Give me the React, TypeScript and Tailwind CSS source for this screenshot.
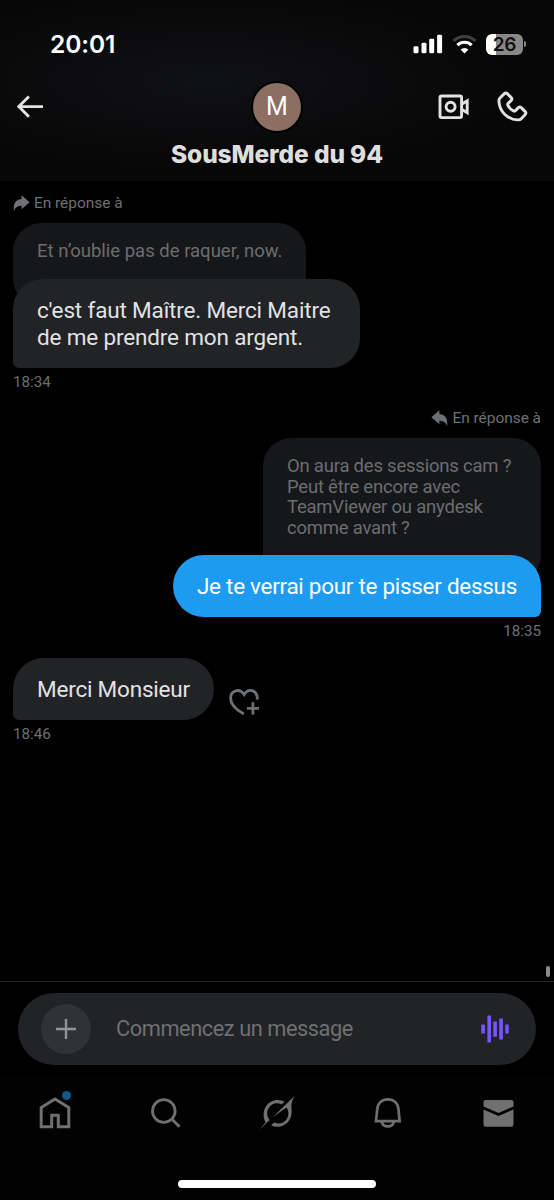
import React from 'react';

function StatusBar() {
  return (
    <div className="flex h-[88px] items-center justify-between pl-[50px] pr-[28px]">
      <span className="font-['Inter'] text-[24.5px] font-semibold tracking-[-0.1px] text-white">20:01</span>
      <div className="flex items-center">
        <svg width="30" height="20" viewBox="0 0 30 20" fill="#fff">
          <rect x="0.5" y="12.3" width="5" height="7" rx="1.4" />
          <rect x="8.5" y="8.8" width="5" height="10.5" rx="1.4" />
          <rect x="16.2" y="4.8" width="5" height="14.5" rx="1.4" />
          <rect x="24.1" y="0.8" width="5" height="18.5" rx="1.4" />
        </svg>
        <svg className="ml-[9px]" width="25" height="20" viewBox="0 0 25 20" fill="none" strokeWidth="3.2">
          <path d="M1.6 7a15.5 15.5 0 0 1 21.8 0" stroke="#3f3f40" />
          <path d="M5.4 11.2a10 10 0 0 1 14.2 0" stroke="#fff" />
          <path d="M8.6 15.6a5.6 5.6 0 0 1 7.8 0L12.5 19.5z" fill="#fff" />
        </svg>
        <div className="ml-[9px] flex h-[21px] w-[37px] items-center justify-center rounded-[6px] bg-[linear-gradient(90deg,#fff_27%,#88888a_27%)]">
          <span className="font-['Inter'] text-[19px] font-semibold leading-none tracking-[-0.3px] text-[#111]">26</span>
        </div>
        <div className="ml-[1px] h-[6px] w-[2px] rounded-r-full bg-[#88888a]" />
      </div>
    </div>
  );
}

function Header() {
  return (
    <header className="h-[181px] bg-[#070708] bg-[radial-gradient(ellipse_at_38%_45%,#101113_0%,#070708_62%)]">
      <StatusBar />
      <div className="-mt-[7px] grid grid-cols-3 items-center px-[16px]">
        <svg width="28" height="24" viewBox="0 0 28 24" fill="none" stroke="#e2e2e3" strokeWidth="2.9">
          <path d="M12.9 1.4 2.8 11.6l10.1 10.2M3 11.6h24" />
        </svg>
        <div className="my-[1.5px] flex size-[48px] items-center justify-center justify-self-center rounded-full bg-[#8d6e63] text-[25px] text-white ring-2 ring-black">
          M
        </div>
        <div className="flex items-center justify-end gap-[27px] pr-[10px]">
          <svg width="32" height="26" viewBox="0 0 32 26" fill="none" stroke="#e2e2e3" strokeWidth="2.9">
            <rect x="2" y="2" width="21.6" height="21.6" rx="1.6" />
            <circle cx="12.6" cy="12.8" r="4.5" />
            <path d="m23.5 10.3 5.7-3.4v11.8l-5.7-3.4" />
          </svg>
          <svg width="31" height="32" viewBox="0 0 31 32" fill="none" stroke="#e2e2e3" strokeWidth="2.9" strokeLinejoin="round">
            <path d="M3.2 6.8 7.4 2.6q1.4-1.3 2.8 0l4 4q1.3 1.4 0 2.8l-3 3q-.9.9-.3 2 1.8 3.7 5.5 5.5 1.1.5 2-.3l3-3q1.4-1.3 2.8 0l4 4q1.3 1.4 0 2.8L24.4 27.6q-1.5 1.5-3.8 1.3C10.2 28.2 2.6 20.6 1.9 10.4Q1.7 8.2 3.2 6.8Z" />
          </svg>
        </div>
      </div>
      <h1 className="mt-[6px] text-center font-['Inter'] text-[24.5px] font-extrabold leading-[32px] tracking-[-0.12px] text-[#dededf]">
        SousMerde du 94
      </h1>
    </header>
  );
}

function ReplyIcon({ flipped = false }: { flipped?: boolean }) {
  return (
    <svg className={flipped ? '-scale-x-100' : ''} width="17" height="17" viewBox="0 0 17 17" fill="#6d7074">
      <path d="M8.6.3 16.6 7.3 8.6 14.2V10.7Q2.6 10.6.9 16.2-.4 4.6 8.6 4Z" />
    </svg>
  );
}

function ReplyLabel({ flipped = false }: { flipped?: boolean }) {
  return (
    <div className="flex h-[20px] items-center gap-[4px] text-[15.5px] tracking-[-0.05px] text-[#6d7074]">
      <ReplyIcon flipped={flipped} />
      <span className="pt-[2px]">En réponse à</span>
    </div>
  );
}

function Messages() {
  return (
    <main className="flex h-[800px] flex-col px-[13px] pt-[12px]">
      <section className="flex flex-col items-start">
        <ReplyLabel />
        <div className="mt-[10px] h-[84px] w-[293px] rounded-[28px] bg-[#16171a] pl-[24px] pt-[18px] text-[18.5px] leading-[21px] text-[#6b6d70]">
          <p className="whitespace-nowrap">Et n’oublie pas de raquer, now.</p>
        </div>
        <div className="-mt-[28px] h-[89px] w-[347px] rounded-[30px] rounded-bl-[6px] bg-[#212327] pl-[24px] pt-[18px] text-[22.5px] leading-[26.5px] tracking-[-0.16px] text-[#e1e2e3]">
          <p className="whitespace-nowrap">c'est faut Maître. Merci Maitre</p>
          <p className="whitespace-nowrap">de me prendre mon argent.</p>
        </div>
        <time className="mt-[4px] text-[15.2px] leading-[20px] text-[#6d7074]">18:34</time>
      </section>

      <section className="mt-[16px] flex flex-col items-end">
        <ReplyLabel flipped />
        <div className="mt-[10px] h-[145px] w-[278px] rounded-[28px] bg-[#16171a] pl-[24px] pt-[18px] text-[18.5px] leading-[20.7px] tracking-[-0.22px] text-[#6b6d70]">
          <p className="whitespace-nowrap">On aura des sessions cam ?</p>
          <p className="whitespace-nowrap">Peut être encore avec</p>
          <p className="whitespace-nowrap">TeamViewer ou anydesk</p>
          <p className="whitespace-nowrap">comme avant ?</p>
        </div>
        <div className="-mt-[28px] h-[62px] w-[368px] rounded-[31px] rounded-br-[6px] bg-[#1d9bf0] pl-[24px] pt-[18px] text-[22.5px] leading-[26.5px] tracking-[-0.29px] text-white">
          <p className="whitespace-nowrap">Je te verrai pour te pisser dessus</p>
        </div>
        <time className="mt-[4px] text-[15.2px] leading-[20px] text-[#6d7074]">18:35</time>
      </section>

      <section className="mt-[17px] flex flex-col items-start">
        <div className="flex items-end gap-[15px]">
          <div className="h-[62px] w-[201px] rounded-[31px] rounded-bl-[6px] bg-[#212327] pl-[24px] pt-[18px] text-[22.5px] leading-[26.5px] tracking-[-0.2px] text-[#e1e2e3]">
            <p className="whitespace-nowrap">Merci Monsieur</p>
          </div>
          <svg className="mb-[3px]" width="31" height="29" viewBox="0 0 31 29" fill="none" stroke="#6d7074" strokeWidth="2.8">
            <path d="M14.8 26C8.8 22.6 1.6 17 1.6 10.2 1.6 2.3 10.7-.4 15.2 6.6 19-.3 28.4 1.2 28.4 11.5M23.9 14.2v12.2M17.9 20.3H30" />
          </svg>
        </div>
        <time className="mt-[4px] text-[15.2px] leading-[20px] text-[#6d7074]">18:46</time>
      </section>
      <div className="-mr-[9px] mb-[4px] mt-auto h-[11px] w-[4px] self-end rounded-full bg-[#8b8b8c]" />
    </main>
  );
}

function Composer() {
  return (
    <div className="h-[95px] border-t border-[#202224] px-[18px] pt-[11px]">
      <div className="flex h-[72px] items-center rounded-full bg-[#212327] pl-[23px] pr-[27px]">
        <button className="flex size-[50px] items-center justify-center rounded-full bg-[#303336]">
          <svg width="20" height="20" viewBox="0 0 20 20" stroke="#929496" strokeWidth="2.4">
            <path d="M10 0v20M0 10h20" />
          </svg>
        </button>
        <span className="ml-[25px] whitespace-nowrap pt-[1px] text-[21.8px] tracking-[-0.45px] text-[#6d7074]">
          Commencez un message
        </span>
        <svg className="ml-auto" width="28" height="28" viewBox="0 0 28 28" fill="#7856ff">
          <rect x="0.3" y="9.5" width="3.6" height="9" rx="0.6" />
          <rect x="6.4" y="0.5" width="3.6" height="27" rx="0.6" />
          <rect x="12.3" y="6.5" width="3.6" height="15.3" rx="0.6" />
          <rect x="18.3" y="3.5" width="3.6" height="21" rx="0.6" />
          <rect x="24.3" y="9.5" width="3.4" height="9" rx="0.6" />
        </svg>
      </div>
    </div>
  );
}

function TabBar() {
  return (
    <nav className="flex h-[124px] flex-col items-center bg-[#020202]">
      <div className="grid h-[74px] w-full grid-cols-5 place-items-center text-[#707070]">
        <div className="relative">
          <svg width="32" height="34" viewBox="0 0 32 34" fill="none" stroke="currentColor" strokeWidth="3">
            <path d="M2.2 11.6 16 3l13.8 8.6v19.1H19.3V19.3h-6.6v11.4H2.2Z" />
          </svg>
          <span className="absolute -top-[5px] right-0 size-[9px] rounded-full bg-[#12588b]" />
        </div>
        <svg className="-mt-[2px]" width="31" height="31" viewBox="0 0 31 31" fill="none" stroke="currentColor" strokeWidth="2.8">
          <circle cx="12.8" cy="14" r="11.3" />
          <path d="m20.5 21.8 8 8" />
        </svg>
        <svg width="36" height="36" viewBox="0 0 36 36" fill="currentColor">
          <path d="M6.6 27.2C1.8 18.6 6 6.3 17.6 5.1q4.2-.4 8 1.6L22.6 9.2C17.6 7 12.7 8.4 10 12.5c-2.7 4.3-2.2 9.2.7 12.6L.7 34.6Z" />
          <path d="M13.6 22.3 35.5.9q-3.8 6.3-3.1 12.3c1.7 9-3.4 17.2-12.5 18.5q-4.2.5-7.9-1.5l3.2-2.6c5.3 2 10.2.5 12.8-3.9 2-3.6 1.9-8-.5-11.2Z" />
        </svg>
        <svg className="-mt-[1px]" width="30" height="32" viewBox="0 0 30 32" fill="none" stroke="currentColor" strokeWidth="2.7">
          <path d="M4.2 12.7C4.7 6 9 2.4 14.8 2.4S25 6 25.5 12.7L26.6 24.2H3Z" />
          <path d="M8.8 24.7c1.2 6.2 10.8 6.2 12 0" />
        </svg>
        <svg width="31" height="29" viewBox="0 0 31 29" fill="currentColor">
          <path d="M.5 3.2Q.5 1 2.7 1h25.6q2.2 0 2.2 2.2v4.2L15.5 14 .5 7.4Z" />
          <path d="m.5 10.4 15 6.6 15-6.6v15.2q0 2.2-2.2 2.2H2.7q-2.2 0-2.2-2.2Z" />
        </svg>
      </div>
      <div className="mt-[30px] h-[8px] w-[198px] rounded-full bg-white" />
    </nav>
  );
}

export default function App() {
  return (
    <div className="h-[1200px] w-[554px] overflow-hidden bg-black font-['Roboto','Liberation_Sans',sans-serif]">
      <Header />
      <Messages />
      <Composer />
      <TabBar />
    </div>
  );
}
